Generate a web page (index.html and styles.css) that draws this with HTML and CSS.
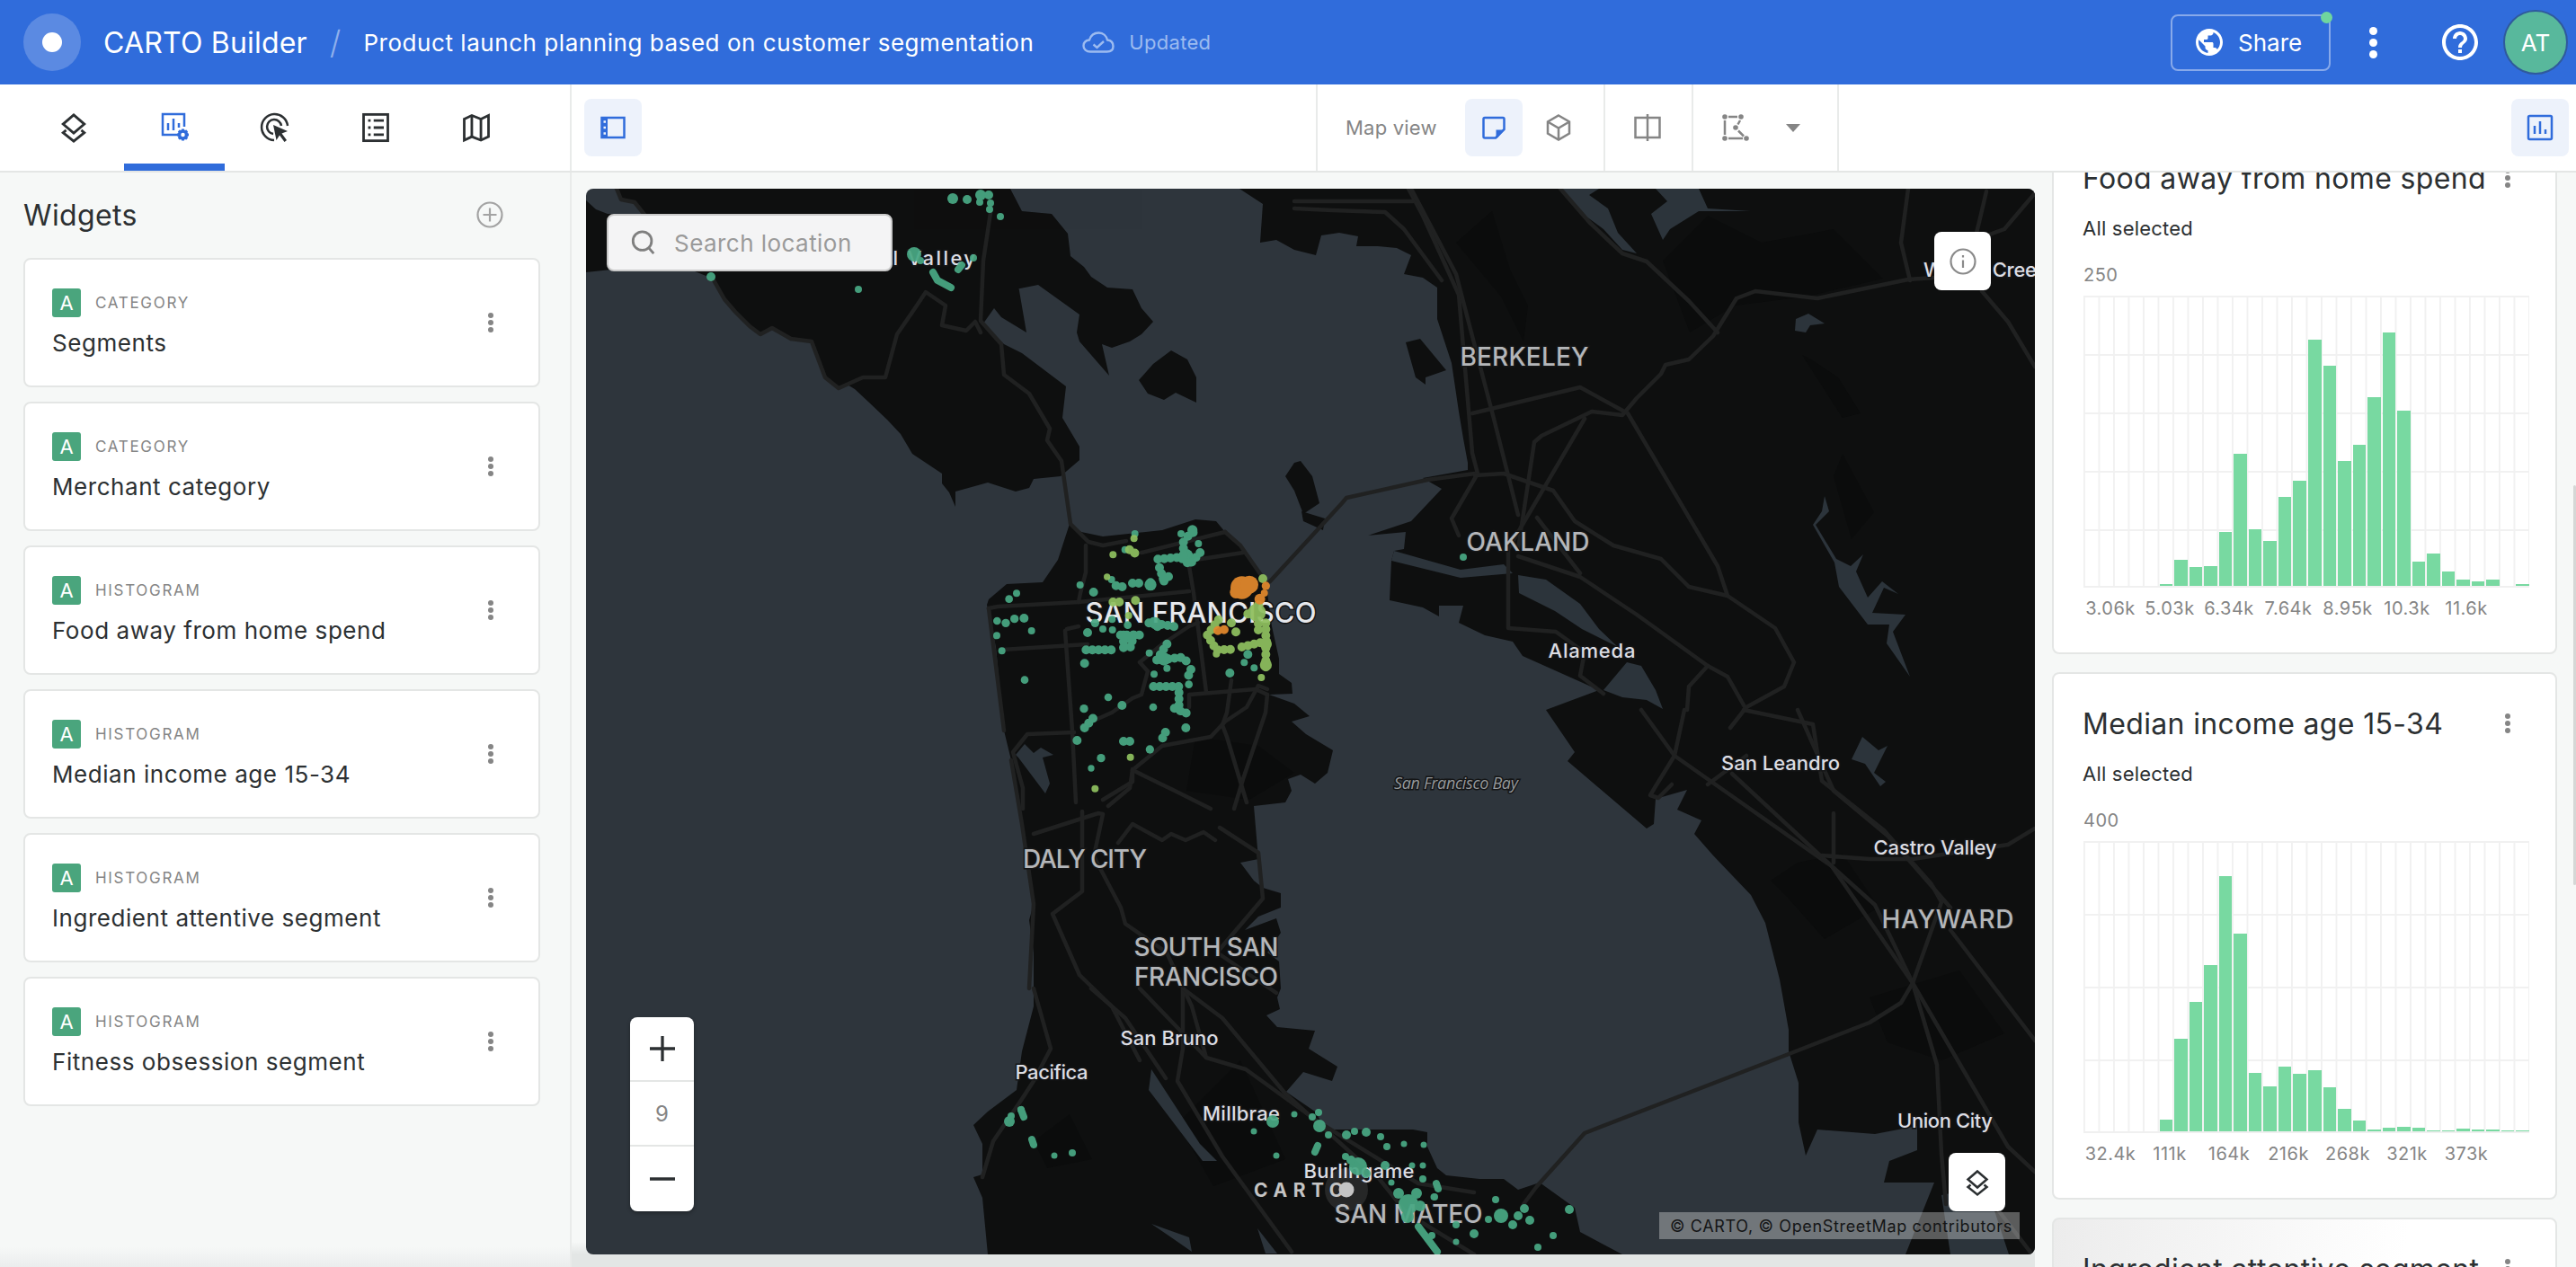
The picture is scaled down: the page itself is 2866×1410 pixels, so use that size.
FILE: index.html
```html
<!DOCTYPE html>
<html lang="en">
<head>
<meta charset="utf-8">
<title>CARTO Builder</title>
<link rel="stylesheet" href="styles.css">
</head>
<body>
<header class="topbar">
  <div class="logo"><span class="logo-dot"></span></div>
  <span class="app-name">CARTO Builder</span>
  <span class="slash">/</span>
  <span class="map-name">Product launch planning based on customer segmentation</span>
  <svg class="cloud" viewBox="0 0 36 24"><path d="M9 22.500C4.500 22.500 1.500 19.500 1.500 16S4 10 8 9.500C9.500 4.500 13.500 1.500 18.500 1.500S27 5 28 9.500C32 10 34.500 12.500 34.500 16.500S31.500 22.500 27.500 22.500Z"/><path d="M12.500 14.500 16.500 18 24 11"/></svg>
  <span class="saved">Updated</span>
  <div class="top-actions">
    <button class="share">
      <svg class="share-icon" viewBox="0 0 24 24"><path d="M12 2C6.480 2 2 6.480 2 12s4.480 10 10 10 10-4.480 10-10S17.520 2 12 2zm-1 17.930c-3.950-.490-7-3.850-7-7.930 0-.620.080-1.210.210-1.790L9 15v1c0 1.100.900 2 2 2v1.930zm6.900-2.540c-.260-.810-1-1.390-1.900-1.390h-1v-3c0-.550-.450-1-1-1H8v-2h2c.550 0 1-.450 1-1V7h2c1.100 0 2-.900 2-2v-.410c2.930 1.190 5 4.060 5 7.410 0 2.080-.800 3.970-2.100 5.390z"/></svg>
      Share
      <span class="share-dot"></span>
    </button>
    <span class="top-kebab"><i></i><i></i><i></i></span>
    <svg class="help" viewBox="0 0 24 24"><path d="M11 18h2v-2h-2v2zm1-16C6.480 2 2 6.480 2 12s4.480 10 10 10 10-4.480 10-10S17.520 2 12 2zm0 18c-4.410 0-8-3.590-8-8s3.590-8 8-8 8 3.590 8 8-3.590 8-8 8zm0-14c-2.210 0-4 1.790-4 4h2c0-1.100.900-2 2-2s2 .900 2 2c0 2-3 1.750-3 5h2c0-2.250 3-2.500 3-5 0-2.210-1.790-4-4-4z"/></svg>
    <div class="avatar">AT</div>
  </div>
</header>

<nav class="toolbar">
  <div class="tabs">
    <div class="tab"><svg class="ico dark" viewBox="0 0 32 32"><path d="M16 3.500 26.500 12.500 16 21.500 5.500 12.500Z"/><path d="M8.500 18.500 5.500 21 16 29.500 26.500 21 23.500 18.500"/></svg></div>
    <div class="tab tab-active"><svg class="ico blue" viewBox="-2 0 36 36"><path d="M22 26H3V3H27V17"/><path d="M9 21V13M15 21V8M21 18V13"/><circle class="gear" cx="25.500" cy="26" r="4"/><path class="gear-teeth" d="M25.500 19.500V22M25.500 30V32.500M19 26H21.500M29.500 26H32M20.900 21.400 22.600 23.100M28.400 28.900 30.100 30.600M30.100 21.400 28.400 23.100M22.600 28.900 20.900 30.600"/></svg></div>
    <div class="tab"><svg class="ico dark" viewBox="0 0 36 36"><path d="M17 32A14.500 14.500 0 1 1 32 16"/><path d="M16 25A8 8 0 1 1 25 16"/><path class="solid" d="M16 15 32 22 25.500 24.500 31 32 28.500 34 23 26.500 19.500 32Z"/></svg></div>
    <div class="tab"><svg class="ico dark" viewBox="0 0 32 32"><rect x="4" y="3" width="24" height="26"/><path d="M8.500 9H11M14 9H24M8.500 16H11M14 16H24M8.500 23H11M14 23H24"/></svg></div>
    <div class="tab"><svg class="ico dark" viewBox="0 0 32 32"><path d="M4 7.500 11.500 4 20.500 7.500 28 4V25L20.500 28.500 11.500 25 4 28.500Z"/><path d="M11.500 4V25M20.500 7.500V28.500"/></svg></div>
  </div>
  <div class="view-tools">
    <button class="tool tool-on"><svg class="ico blue" viewBox="0 0 32 32"><rect x="3.500" y="5" width="25" height="22"/><path class="solid" d="M3.500 5H10V27H3.500Z"/><path class="notch" d="M5.500 9.500H8M5.500 16H8M5.500 22.500H8"/></svg></button>
    <div class="tool-group map-view">
      <span class="tool-label">Map view</span>
      <button class="tool tool-on"><svg class="ico blue" viewBox="0 0 32 32"><path d="M27.500 18V6.500A1.500 1.500 0 0 0 26 5H6A1.500 1.500 0 0 0 4.500 6.500V26A1.500 1.500 0 0 0 6 27.500H18Z"/><path class="solid" d="M18.500 18.500H27.500L20 27.500H18.500Z"/></svg></button>
      <button class="tool"><svg class="ico grey" viewBox="0 0 32 32"><path d="M16 2.500 28 9.500V22.500L16 29.500 4 22.500V9.500Z"/><path d="M4 9.500 16 16.500 28 9.500M16 16.500V29.500"/></svg></button>
    </div>
    <div class="tool-group split">
      <button class="tool"><svg class="ico grey" viewBox="0 0 32 32"><rect x="2.500" y="5" width="27" height="22"/><path d="M16 1V31"/></svg></button>
    </div>
    <div class="tool-group draw">
      <button class="tool"><svg class="ico grey" viewBox="0 0 32 32"><path d="M8 4H18M4 8V24M21 8 18.500 12.500M19 19.500 25 25.500M8 28H24"/><circle class="solid" cx="4" cy="4" r="2.800"/><circle class="solid" cx="22" cy="4" r="2.800"/><circle class="solid" cx="16" cy="16" r="2.800"/><circle class="solid" cx="4" cy="28" r="2.800"/><circle class="solid" cx="28" cy="28" r="2.800"/></svg></button>
      <span class="caret"></span>
    </div>
    <button class="tool tool-on tool-end"><svg class="ico blue" viewBox="0 0 32 32"><rect x="3" y="3" width="26" height="26" rx="1.500"/><path d="M10 23V14M16 23V9M22 23V18"/></svg></button>
  </div>
</nav>

<main class="workspace">
  <aside class="left-panel">
    <div class="panel-head">
      <h2 class="panel-title">Widgets</h2>
      <svg class="add" viewBox="0 0 32 32"><circle cx="16" cy="16" r="13.500"/><path d="M16 8.500V23.500M8.500 16H23.500"/></svg>
    </div>
    <article class="widget-row">
      <div><div class="widget-meta"><span class="src-badge">A</span><span class="widget-type">CATEGORY</span></div><div class="widget-name">Segments</div></div>
      <span class="kebab"><i></i><i></i><i></i></span>
    </article>
    <article class="widget-row">
      <div><div class="widget-meta"><span class="src-badge">A</span><span class="widget-type">CATEGORY</span></div><div class="widget-name">Merchant category</div></div>
      <span class="kebab"><i></i><i></i><i></i></span>
    </article>
    <article class="widget-row">
      <div><div class="widget-meta"><span class="src-badge">A</span><span class="widget-type">HISTOGRAM</span></div><div class="widget-name">Food away from home spend</div></div>
      <span class="kebab"><i></i><i></i><i></i></span>
    </article>
    <article class="widget-row">
      <div><div class="widget-meta"><span class="src-badge">A</span><span class="widget-type">HISTOGRAM</span></div><div class="widget-name">Median income age 15-34</div></div>
      <span class="kebab"><i></i><i></i><i></i></span>
    </article>
    <article class="widget-row">
      <div><div class="widget-meta"><span class="src-badge">A</span><span class="widget-type">HISTOGRAM</span></div><div class="widget-name">Ingredient attentive segment</div></div>
      <span class="kebab"><i></i><i></i><i></i></span>
    </article>
    <article class="widget-row">
      <div><div class="widget-meta"><span class="src-badge">A</span><span class="widget-type">HISTOGRAM</span></div><div class="widget-name">Fitness obsession segment</div></div>
      <span class="kebab"><i></i><i></i><i></i></span>
    </article>
  </aside>

  <section class="map-column">
    <div class="map">
      <svg class="map-art" viewBox="652 210 1612 1186" width="1612" height="1186">
        <rect class="water" x="652" y="210" width="1612" height="1186"/>
        <g class="land">
          <path d="M652 303V223L663 233 676 238 717 238 706 225 691 222 686 210H1124L1137 235 1170 238 1188 260 1191 285 1206 297 1214 308 1232 320 1260 322 1270 343 1283 358 1270 372 1257 380 1237 387 1226 383 1234 418 1201 380 1198 370 1201 350 1155 317 1130 322 1132 312 1142 370 1114 353 1106 343 1094 360 1117 383 1137 393 1186 430 1182 465 1201 497 1201 512 1180 530 1150 533 1145 543 1130 547 1099 537 1063 547 1063 564 1056 548 1048 538 1048 527 1015 505 1002 483 987 467 966 447 951 433 941 427 933 432 918 420 903 380 880 377 859 365 846 372 834 363 818 347 806 333 793 310 773 302 680 300Z"/>
          <path d="M1303 390 1321 400 1331 420 1331 448 1308 437 1295 445 1277 438 1267 423 1283 405Z"/>
          <path d="M1379 210 1405 227 1402 270 1420 267 1440 278 1464 284 1470 262 1490 259 1511 263 1509 274 1533 274 1554 276 1570 284 1562 305 1583 309 1599 320 1599 355 1615 404 1623 458 1628 488 1633 515 1633 523 1583 532 1604 544 1570 580 1522 596 1564 592 1562 611 1551 613 1548 624 1546 668 1583 676 1601 686 1601 674 1628 674 1623 693 1652 707 1683 714 1694 730 1779 768 1720 790 1752 837 1744 847 1832 922 1840 917 1842 889 1877 879 1866 901 1893 913 1885 928 1906 952 1948 996 1964 1027 1980 1090 1990 1146 1990 1170 2001 1205 2001 1249 2009 1286 2022 1257 2086 1262 2133 1253 2133 1280 2102 1292 2096 1316 2152 1316 2120 1396H2264V210Z"/>
          <path d="M1430 530 1440 515 1447 513 1460 530 1468 560 1450 572 1440 546Z"/>
          <path d="M1448 569 1474 577 1472 590 1450 580Z"/>
          <path d="M1564 381 1580 377 1609 412 1586 420 1586 428 1575 420Z"/>
          <path d="M1098 673 1100 667 1120 650 1160 648 1177 623 1190 583 1203 592 1227 597 1293 590 1330 578 1353 580 1363 592 1380 607 1410 650 1410 660 1415 697 1423 733 1423 750 1437 760 1438 772 1412 773 1440 783 1457 797 1437 803 1453 817 1483 835 1477 860 1463 872 1447 862 1433 867 1437 880 1430 893 1395 897 1400 956 1380 960 1395 980 1405 988 1425 994 1425 1010 1400 1020 1385 1035 1420 1022 1425 1038 1410 1060 1423 1070 1425 1100 1421 1110 1424 1123 1409 1130 1421 1143 1463 1147 1456 1167 1488 1187 1482 1203 1450 1193 1431 1215 1463 1237 1475 1257 1533 1257 1572 1257 1588 1260 1588 1276 1599 1300 1609 1308 1646 1312 1673 1312 1689 1324 1713 1316 1752 1344 1758 1371 1805 1396H1099L1093 1333 1083 1310 1093 1307 1093 1273 1083 1252 1099 1237 1131 1213 1137 1170 1150 1120V1060L1145 1024 1150 1006 1137 917 1125 846 1117 813 1108 720Z"/>
        </g>
        <g class="land-dark">
          <path d="M1850 290 1900 240 1960 270 2040 255 2095 310 2010 330 1930 340 1880 370Z"/>
          <path d="M1620 270 1660 235 1680 300 1700 340 1695 380 1670 330Z"/>
          <path d="M2015 400 2045 420 2070 460 2050 465 2005 395Z"/>
          <path d="M2050 505 2085 570 2060 600 2040 530Z"/>
          <path d="M1970 980 2000 960 2050 950 2090 1010 2030 1045 1990 1000Z"/>
          <path d="M2080 1110 2180 1080 2230 1150 2160 1180 2100 1160Z"/>
          <path d="M1330 820 1400 830 1440 860 1390 890 1320 880Z"/>
          <path d="M1150 1270 1190 1240 1215 1290 1165 1300Z"/>
          <path d="M1310 1250 1380 1180 1430 1290 1350 1320Z"/>
        </g>
        <g class="water-shape">
          <path d="M1736 210H1779L1768 217 1789 232 1800 259 1821 282 1805 278 1784 255 1758 236Z"/>
          <path d="M1842 210H1890L1900 232 1948 235H1890L1858 255 1850 267 1837 238 1855 224Z"/>
          <path d="M1998 355 2012 349 2030 360 2014 362 2009 370 1997 368Z"/>
          <path d="M2030 552 2035 569 2020 584 2043 622 2059 630 2073 617 2065 636 2078 665 2094 647 2112 661 2096 654 2083 682 2120 684 2106 703 2125 753 2099 716 2102 695 2078 695 2046 653 2041 626 2017 584 2027 569Z"/>
          <path d="M1689 640 1720 645 1758 672 1779 700 1800 720 1760 700 1730 680 1690 660Z"/>
          <path d="M1784 768 1810 737 1826 741 1842 768 1850 789 1832 779 1805 776Z"/>
          <path d="M1551 613 1625 634 1673 628 1683 638 1625 643 1548 624Z"/>
          <path d="M2060 845 2072 820 2090 835 2100 830 2085 860 2098 870 2092 875 2075 850Z"/>
          <path d="M1130 840 1140 828 1150 838 1158 832 1172 840 1160 843 1168 872 1163 883 1133 843Z"/>
          <path d="M1281 1190 1335 1273 1354 1292 1338 1292 1278 1213Z"/>
          <path d="M1281 1362 1323 1377 1326 1393 1303 1377Z"/>
          <path d="M1399 1367 1421 1395H1408Z"/>
          <path d="M2160 1330 2210 1320 2235 1396H2170Z"/>
        </g>
        <g class="roads">
          <path d="M1102 237 1094 290 1091 357 1114 383 1117 417 1145 438 1168 477 1165 490 1181 513 1191 583 1211 603 1227 607 1253 602"/>
          <path d="M793 310 806 333 818 347 834 363 846 372 859 365 880 377 903 380 918 420 933 432 960 420 985 420 998 372 1020 340 1030 325 1052 340 1048 362 1075 368 1085 358 1091 370"/>
          <path d="M686 210 691 222 706 225 730 255"/>
          <path d="M1100 677 1110 675 1200 670 1323 658"/>
          <path d="M1115 723 1210 717"/>
          <path d="M1100 677 1117 813"/>
          <path d="M1208 607V637L1202 660 1200 670"/>
          <path d="M1187 700 1200 697M1185 702 1193 813 1197 893"/>
          <path d="M1127 837 1143 817 1195 815M1127 837 1138 877V900"/>
          <path d="M1270 615 1363 592M1330 623 1383 615M1323 630 1328 660 1342 770"/>
          <path d="M1363 592 1380 607 1410 650"/>
          <path d="M1413 647 1493 560 1498 554 1588 534 1641 527"/>
          <path d="M1410 767 1400 763 1387 787 1363 803 1347 820 1293 830 1260 857 1257 877 1233 897"/>
          <path d="M1410 773 1408 793 1383 867 1373 900"/>
          <path d="M1370 757 1365 793 1360 807 1365 820 1387 893"/>
          <path d="M1323 787V773L1397 767 1410 773"/>
          <path d="M1260 777 1237 793 1203 808M1277 747 1270 773 1260 777M1268 737 1293 717 1323 697 1333 693M1268 737 1277 747"/>
          <path d="M1260 857 1307 880 1347 900"/>
          <path d="M1150 928 1222 905 1227 906 1217 953 1247 1010 1252 1028 1298 1060 1326 1120 1342 1177"/>
          <path d="M1204 903V992L1171 1017 1201 1085 1237 1120 1268 1180"/>
          <path d="M1260 856V870L1227 890"/>
          <path d="M1357 921 1400 949 1405 1000 1354 1060 1420 1105"/>
          <path d="M1352 935 1339 926 1319 935 1303 928 1293 935 1260 917 1244 938"/>
          <path d="M1125 846 1137 917 1150 1006 1145 1100"/>
          <path d="M1150 1100 1169 1167 1150 1203 1137 1223 1105 1270 1093 1310"/>
          <path d="M1214 1100 1252 1133 1297 1200"/>
          <path d="M1316 1100V1167L1310 1203 1360 1287 1437 1393"/>
          <path d="M1268 1100 1342 1177 1386 1190 1469 1250 1578 1317 1640 1327"/>
          <path d="M1316 1100 1360 1133 1430 1217 1533 1310 1565 1350 1640 1396"/>
          <path d="M1567 210 1583 240 1604 286 1623 328 1638 504 1644 527 1615 577 1623 596"/>
          <path d="M1570 210 1620 305 1662 466 1689 573"/>
          <path d="M1440 224H1572M1440 232 1482 234 1541 236 1562 255 1604 312"/>
          <path d="M1641 529 1673 527 1728 546 1752 580 1795 607 1848 622 1879 653 1922 663 1975 699 1996 737 1985 764 1943 787 1925 810"/>
          <path d="M1638 460 1758 431 1811 460 1911 630 1922 663"/>
          <path d="M1771 458 1715 485 1707 492 1689 611"/>
          <path d="M1771 458 1805 462 1821 443 1848 416 1853 406 1879 400 1906 374 1932 332 1953 324 2022 332 2123 311 2152 309"/>
          <path d="M1763 466 1678 611V699L1731 703 1763 726 1758 752 1784 772"/>
          <path d="M1736 210 1768 247 1789 267 1805 282 1832 291 1879 335 1911 370"/>
          <path d="M1689 619 1758 642 1821 684 1900 741 1922 753 1943 790"/>
          <path d="M1710 576 1758 638M1900 741 1879 764 1877 790"/>
          <path d="M2123 210 2115 270 2125 312"/>
          <path d="M2210 213 2202 247 2197 267 2230 255 2264 215M2205 324 2234 358 2264 408"/>
          <path d="M1874 790 1863 841 1842 875 1836 885 1845 888 1860 873"/>
          <path d="M1826 790 1863 841 2038 964 2086 1007 2128 1094 2155 1185 2160 1284 2165 1340"/>
          <path d="M1940 790 2017 806 2027 869 2096 924 2149 984 2160 1004 2128 1094 2115 1116 2080 1138 1985 1175 1763 1261 1710 1320 1695 1340"/>
          <path d="M1900 873 1943 841M1927 861 2038 964 2128 1094 2234 1276 2264 1304"/>
          <path d="M2170 1035 2264 1158M2040 905V960M2027 952 2080 956 2128 956 2234 940 2264 922"/>
          <path d="M2000 790 2040 880 2100 930 2170 1010"/>
          <path d="M2195 1310 2264 1400"/>
        </g>
        <g class="map-labels">
          <text class="city" x="1696" y="407" textLength="143">BERKELEY</text>
          <text class="city" x="1700" y="613" textLength="137">OAKLAND</text>
          <text class="metro" x="1336" y="693" textLength="257">SAN FRANCISCO</text>
          <text class="town" x="1771" y="732" textLength="97">Alameda</text>
          <text class="city" x="1207" y="966" textLength="138">DALY CITY</text>
          <text class="city" x="1342" y="1064" textLength="161">SOUTH SAN</text>
          <text class="city" x="1342" y="1097" textLength="160">FRANCISCO</text>
          <text class="bay" x="1620" y="878" textLength="138">San Francisco Bay</text>
          <text class="town" x="1981" y="857" textLength="132">San Leandro</text>
          <text class="town" x="2153" y="951" textLength="137">Castro Valley</text>
          <text class="city" x="2167" y="1033" textLength="147">HAYWARD</text>
          <text class="town" x="2164" y="1255" textLength="106">Union City</text>
          <text class="town" x="1381" y="1247" textLength="86">Millbrae</text>
          <text class="town" x="1301" y="1163" textLength="109">San Bruno</text>
          <text class="town" x="1170" y="1201" textLength="81">Pacifica</text>
          <text class="town" x="1512" y="1311" textLength="123">Burlingame</text>
          <text class="city" x="1567" y="1361" textLength="165">SAN MATEO</text>
          <text class="town" x="1020" y="295" textLength="130">Mill Valley</text>
          <text class="town" x="2209" y="308" textLength="138">Walnut Creek</text>
        </g>
        <g class="carto-mark">
          <circle class="halo" cx="1498" cy="1324" r="24"/>
          <circle class="dot" cx="1498" cy="1324" r="8.500"/>
          <text x="1395" y="1332">CARTO</text>
        </g>
        <g class="pts pts-green">
          <g class="spots">
            <circle cx="1060" cy="221" r="6"/><circle cx="1076" cy="222" r="5"/><circle cx="1091" cy="217" r="6"/><circle cx="1100" cy="217" r="5"/><circle cx="1090" cy="225" r="4"/><circle cx="1102" cy="226" r="4"/><circle cx="1101" cy="233" r="4"/><circle cx="1113" cy="241" r="4"/>
            <circle cx="1017" cy="283" r="8"/><circle cx="1024" cy="290" r="4"/><circle cx="1083" cy="287" r="4"/><circle cx="955" cy="322" r="4"/><circle cx="791" cy="308" r="5"/>
            <circle cx="1628" cy="620" r="4"/>
            <circle cx="1136" cy="1235" r="4"/><circle cx="1125" cy="1242" r="4"/><circle cx="1123" cy="1248" r="6"/><circle cx="1193" cy="1283" r="4"/><circle cx="1173" cy="1286" r="3.500"/>
            <circle cx="1440" cy="1240" r="3.500"/><circle cx="1416" cy="1248" r="7"/><circle cx="1395" cy="1259" r="3.500"/><circle cx="1420" cy="1286" r="3.500"/><circle cx="1467" cy="1238" r="4"/><circle cx="1460" cy="1243" r="4"/><circle cx="1468" cy="1253" r="7"/><circle cx="1478" cy="1263" r="4"/><circle cx="1498" cy="1263" r="5"/><circle cx="1507" cy="1259" r="4"/><circle cx="1520" cy="1260" r="5"/><circle cx="1536" cy="1265" r="4"/><circle cx="1543" cy="1276" r="4"/><circle cx="1562" cy="1273" r="3.500"/><circle cx="1584" cy="1274" r="3.500"/><circle cx="1497" cy="1287" r="4"/><circle cx="1511" cy="1298" r="10"/><circle cx="1503" cy="1291" r="5"/><circle cx="1520" cy="1306" r="5"/><circle cx="1541" cy="1297" r="5"/><circle cx="1571" cy="1297" r="3.500"/><circle cx="1583" cy="1297" r="3.500"/><circle cx="1583" cy="1312" r="4"/><circle cx="1548" cy="1316" r="3.500"/><circle cx="1595" cy="1332" r="3.500"/>
            <circle cx="1567" cy="1340" r="11"/><circle cx="1556" cy="1328" r="6"/><circle cx="1576" cy="1328" r="6"/><circle cx="1566" cy="1354" r="7"/><circle cx="1580" cy="1342" r="6"/><circle cx="1596" cy="1332" r="4"/><circle cx="1664" cy="1335" r="4"/><circle cx="1670" cy="1353" r="8"/><circle cx="1689" cy="1353" r="5"/><circle cx="1696" cy="1345" r="5"/><circle cx="1702" cy="1358" r="5"/><circle cx="1746" cy="1346" r="5"/><circle cx="1728" cy="1375" r="4"/><circle cx="1711" cy="1388" r="4"/><circle cx="1620" cy="1363" r="4"/><circle cx="1640" cy="1373" r="5"/><circle cx="1620" cy="1382" r="3.500"/><circle cx="1593" cy="1375" r="4"/><circle cx="1656" cy="1357" r="4"/><circle cx="1683" cy="1363" r="5"/>
          </g>
          <path class="trail" d="M1066 300 1070 295M1038 303 1043 312 1058 320M1136 1235 1139 1243M1148 1268 1150 1274M1466 1275 1463 1282M1598 1317 1600 1323M1578 1365 1599 1393"/>
        </g>
        <g transform="translate(1080 560) scale(.33333)">
          <g class="pts pts-green">
            <g class="spots-big">
              <circle cx="548" cy="102" r="12"/><circle cx="702" cy="102" r="12"/><circle cx="760" cy="135" r="12"/><circle cx="515" cy="155" r="12"/><circle cx="365" cy="273" r="12"/><circle cx="153" cy="301" r="12"/><circle cx="128" cy="320" r="13"/><circle cx="88" cy="393" r="13"/><circle cx="117" cy="400" r="14"/><circle cx="146" cy="386" r="14"/><circle cx="178" cy="384" r="15"/><circle cx="203" cy="426" r="12"/><circle cx="87" cy="442" r="12"/><circle cx="104" cy="493" r="12"/><circle cx="180" cy="590" r="13"/><circle cx="459" cy="648" r="13"/><circle cx="378" cy="686" r="14"/><circle cx="609" cy="681" r="13"/><circle cx="435" cy="851" r="14"/><circle cx="402" cy="885" r="11"/><circle cx="598" cy="822" r="14"/><circle cx="718" cy="750" r="15"/><circle cx="728" cy="605" r="13"/><circle cx="612" cy="571" r="12"/><circle cx="596" cy="500" r="12"/><circle cx="655" cy="551" r="12"/><circle cx="441" cy="420" r="12"/><circle cx="473" cy="423" r="12"/><circle cx="524" cy="407" r="13"/><circle cx="415" cy="400" r="14"/><circle cx="913" cy="532" r="12"/><circle cx="946" cy="550" r="12"/><circle cx="472" cy="388" r="12"/><circle cx="470" cy="255" r="12"/><circle cx="720" cy="175" r="22"/><circle cx="645" cy="520" r="22"/><circle cx="525" cy="445" r="17"/><circle cx="600" cy="272" r="20"/><circle cx="645" cy="250" r="17"/><circle cx="615" cy="400" r="20"/><circle cx="740" cy="90" r="17"/>
            </g>
            <path class="trail-big" d="M625 187 700 180 730 205 770 160M710 130V190M725 110 755 90M630 215 645 260M660 245 640 265M600 265V285M485 275 510 280M540 267H565M410 297H430M385 490H490M500 440H580M510 440V490M545 440 530 490M390 432H410M380 535 392 522M595 400 640 405 680 412M610 395 630 420M655 470 620 525 700 515 725 530M735 555 725 580M610 612H695V680M680 685 730 705M505 675 498 685M380 750 420 705M355 792H362M510 795H540M650 765 640 785M925 505H935M865 567 870 585"/>
          </g>
          <g class="pts pts-lime">
            <g class="spots-big">
              <circle cx="475" cy="172" r="12"/><circle cx="545" cy="118" r="12"/><circle cx="533" cy="848" r="12"/><circle cx="415" cy="953" r="12"/><circle cx="527" cy="375" r="12"/><circle cx="970" cy="582" r="12"/><circle cx="455" cy="246" r="11"/><circle cx="975" cy="252" r="15"/><circle cx="820" cy="503" r="12"/><circle cx="955" cy="365" r="30"/><circle cx="985" cy="540" r="20"/><circle cx="985" cy="470" r="20"/>
            </g>
            <path class="trail-big" d="M530 155 560 175M475 330H515M550 325 565 320M790 440 830 385M790 440 820 490 870 488M870 400H885M960 360V430M925 370H985M960 340 940 370M905 480 990 460M985 400V555M885 430H890"/>
          </g>
          <g class="pts pts-orange">
            <circle cx="905" cy="282" r="38"/><circle cx="930" cy="272" r="30"/><circle cx="885" cy="298" r="20"/>
            <circle cx="985" cy="276" r="14"/><circle cx="965" cy="320" r="18"/><circle cx="980" cy="300" r="12"/>
            <path class="trail-big" d="M825 425 860 420"/>
          </g>
        </g>
      </svg>

      <div class="search"><svg class="search-ico" viewBox="0 0 32 32"><circle cx="14.500" cy="14" r="11"/><path d="M22 22 28 29"/></svg><span>Search location</span></div>
      <button class="map-btn info"><svg viewBox="0 0 32 32"><circle cx="16" cy="16" r="13.500"/><path d="M16 14.500V23M16 9V11.500"/></svg></button>
      <div class="zoom-ctrl">
        <span class="zoom-cell"><svg viewBox="0 0 30 30"><path d="M15 0V30M0 15H30"/></svg></span>
        <span class="zoom-cell zoom-level">9</span>
        <span class="zoom-cell"><svg viewBox="0 0 30 30"><path d="M0 15H30"/></svg></span>
      </div>
      <button class="map-btn layers"><svg class="ico dark" viewBox="0 0 32 32"><path d="M16 3.500 26.500 12.500 16 21.500 5.500 12.500Z"/><path d="M8.500 18.500 5.500 21 16 29.500 26.500 21 23.500 18.500"/></svg></button>
      <div class="attribution">© CARTO, © OpenStreetMap contributors</div>
    </div>
  </section>

  <aside class="right-panel">
    <div class="right-scroll">
      <article class="hist-card">
        <div class="hist-head"><h3 class="hist-title">Food away from home spend</h3><span class="kebab"><i></i><i></i><i></i></span></div>
        <div class="hist-sel">All selected</div>
        <div class="hist-max">250</div>
        <div class="hist-plot hist-five">
          <i></i><i></i><i></i><i></i><i></i>
          <i class="bar" style="height:2px"></i><i class="bar" style="height:29px"></i><i class="bar" style="height:21px"></i><i class="bar" style="height:22px"></i><i class="bar" style="height:60px"></i><i class="bar" style="height:147px"></i><i class="bar" style="height:63px"></i><i class="bar" style="height:50px"></i><i class="bar" style="height:99px"></i><i class="bar" style="height:117px"></i><i class="bar" style="height:274px"></i><i class="bar" style="height:245px"></i><i class="bar" style="height:139px"></i><i class="bar" style="height:157px"></i><i class="bar" style="height:210px"></i><i class="bar" style="height:282px"></i><i class="bar" style="height:195px"></i><i class="bar" style="height:27px"></i><i class="bar" style="height:36px"></i><i class="bar" style="height:16px"></i><i class="bar" style="height:7px"></i><i class="bar" style="height:5px"></i><i class="bar" style="height:7px"></i><i></i><i class="bar" style="height:2px"></i>
        </div>
        <div class="hist-axis"><span>3.06k</span><span>5.03k</span><span>6.34k</span><span>7.64k</span><span>8.95k</span><span>10.3k</span><span>11.6k</span></div>
      </article>
      <article class="hist-card">
        <div class="hist-head"><h3 class="hist-title">Median income age 15-34</h3><span class="kebab"><i></i><i></i><i></i></span></div>
        <div class="hist-sel">All selected</div>
        <div class="hist-max">400</div>
        <div class="hist-plot hist-four">
          <i></i><i></i><i></i><i></i><i></i>
          <i class="bar" style="height:13px"></i><i class="bar" style="height:103px"></i><i class="bar" style="height:144px"></i><i class="bar" style="height:185px"></i><i class="bar" style="height:284px"></i><i class="bar" style="height:220px"></i><i class="bar" style="height:65px"></i><i class="bar" style="height:50px"></i><i class="bar" style="height:72px"></i><i class="bar" style="height:64px"></i><i class="bar" style="height:68px"></i><i class="bar" style="height:49px"></i><i class="bar" style="height:25px"></i><i class="bar" style="height:12px"></i><i class="bar" style="height:2px"></i><i class="bar" style="height:4px"></i><i class="bar" style="height:5px"></i><i class="bar" style="height:4px"></i><i class="bar" style="height:1px"></i><i class="bar" style="height:1px"></i><i class="bar" style="height:3px"></i><i class="bar" style="height:2px"></i><i class="bar" style="height:2px"></i><i class="bar" style="height:1px"></i><i class="bar" style="height:1px"></i>
        </div>
        <div class="hist-axis"><span>32.4k</span><span>111k</span><span>164k</span><span>216k</span><span>268k</span><span>321k</span><span>373k</span></div>
      </article>
      <article class="hist-card hist-fade">
        <div class="hist-head"><h3 class="hist-title">Ingredient attentive segment</h3><span class="kebab"><i></i><i></i><i></i></span></div>
      </article>
    </div>
    <span class="scroll-thumb"></span>
  </aside>
</main>
</body>
</html>
```

FILE: styles.css
```css
* { box-sizing: border-box; }

html, body { height: 100%; }

body {
  margin: 0;
  width: 2866px;
  height: 1410px;
  overflow: hidden;
  display: flex;
  flex-direction: column;
  font-family: Inter, "Liberation Sans", sans-serif;
  color: #2c3032;
  background: #f6f8f7;
}

button { font: inherit; border: 0; background: none; padding: 0; }

/* top bar */
.topbar {
  height: 94px;
  flex: none;
  display: flex;
  align-items: center;
  padding-left: 26px;
  background: #306cdb;
  color: #fff;
}
.logo {
  width: 64px;
  height: 64px;
  border-radius: 50%;
  background: #5b8ae2;
  display: flex;
  align-items: center;
  justify-content: center;
}
.logo-dot { width: 22px; height: 22px; border-radius: 50%; background: #fff; }
.app-name { margin-left: 25px; font-size: 32px; letter-spacing: .2px; }
.slash { margin-left: 25px; font-size: 36px; font-weight: 300; color: #8fb0ec; }
.map-name { margin-left: 25px; font-size: 26px; letter-spacing: .55px; white-space: nowrap; }
.cloud { width: 36px; height: 24px; margin-left: 54px; fill: none; stroke: #9cbbf0; stroke-width: 2.400; }
.saved { margin-left: 16px; font-size: 22px; color: #9cbbf0; letter-spacing: .3px; }
.top-actions { margin-left: auto; display: flex; align-items: center; padding-right: 9px; }
.share {
  position: relative;
  width: 178px;
  height: 63px;
  display: flex;
  align-items: center;
  gap: 16px;
  padding-left: 25px;
  border: 2px solid #87a9ea;
  border-radius: 8px;
  color: #fff;
  font-size: 26px;
}
.share-icon { width: 36px; height: 36px; fill: #fff; margin: 0 -2px; }
.share-dot {
  position: absolute;
  top: -5px;
  right: -4px;
  width: 13px;
  height: 13px;
  border-radius: 50%;
  background: #6fd69e;
}
.top-kebab { display: flex; flex-direction: column; gap: 4px; margin-left: 43px; }
.top-kebab i { width: 9px; height: 9px; border-radius: 50%; background: #fff; }
.help { width: 48px; height: 48px; fill: #fff; margin-left: 68px; }
.avatar {
  width: 72px;
  height: 72px;
  margin-left: 24px;
  border-radius: 50%;
  background: #58b89c;
  border: 2px solid #2f5a9c;
  display: flex;
  align-items: center;
  justify-content: center;
  font-size: 26px;
}

/* toolbar */
.toolbar {
  height: 98px;
  flex: none;
  display: flex;
  background: #fff;
  border-bottom: 2px solid #e4e6e5;
}
.tabs {
  width: 636px;
  flex: none;
  display: flex;
  padding-left: 26px;
  border-right: 2px solid #e9ebea;
}
.tab {
  width: 112px;
  display: flex;
  align-items: center;
  justify-content: center;
  border-bottom: 8px solid transparent;
  border-top: 8px solid transparent;
}
.tab-active { border-bottom-color: #306cdb; }

.ico { width: 32px; height: 32px; fill: none; stroke-width: 2.500; }
.ico .solid { stroke: none; }
.dark { stroke: #2c3032; }
.dark .solid { fill: #2c3032; }
.blue { stroke: #306cdb; }
.blue .solid { fill: #306cdb; }
.blue .notch { stroke: #edf2fb; stroke-width: 2.500; }
.grey { stroke: #858585; }
.grey .solid { fill: #858585; }
.gear { fill: #fff; stroke-width: 3.500; }
.gear-teeth { stroke-width: 3; }
.tab .ico { width: 36px; height: 36px; }

.view-tools { flex: 1; display: flex; align-items: stretch; padding-left: 14px; }
.tool {
  align-self: center;
  width: 64px;
  height: 64px;
  flex: none;
  border-radius: 8px;
  display: flex;
  align-items: center;
  justify-content: center;
}
.tool-on { background: #edf2fb; }
.tool-group { display: flex; align-items: center; border-left: 2px solid #e9ebea; }
.map-view { margin-left: 750px; width: 320px; padding-left: 31px; gap: 8px; }
.tool-label { width: 125px; flex: none; font-size: 22px; color: #858585; letter-spacing: .2px; }
.split { width: 98px; padding-left: 15px; }
.draw { width: 164px; padding-left: 15px; border-right: 2px solid #e9ebea; gap: 24px; }
.caret { width: 0; height: 0; border: 8px solid transparent; border-top: 9px solid #858585; border-bottom: 0; }
.tool-end { margin-left: auto; margin-right: 8px; }

/* workspace */
.workspace { flex: 1; min-height: 0; display: flex; }
.left-panel {
  width: 636px;
  flex: none;
  padding: 28px 33px 0 26px;
  border-right: 2px solid #e9ebea;
  display: flex;
  flex-direction: column;
  gap: 16px;
  background: linear-gradient(#f6f8f7 1196px, #ebeded);
}
.panel-head {
  height: 38px;
  margin-bottom: 13px;
  display: flex;
  align-items: center;
  justify-content: space-between;
  padding-right: 40px;
}
.panel-title { margin: 0; font-size: 32px; font-weight: 400; letter-spacing: .35px; }
.add { width: 32px; height: 32px; fill: none; stroke: #a3a3a3; stroke-width: 2.200; }
.widget-row {
  height: 144px;
  flex: none;
  display: flex;
  align-items: center;
  justify-content: space-between;
  padding: 0 50px 0 30px;
  background: #fff;
  border: 2px solid #e4e6e5;
  border-radius: 8px;
}
.widget-meta { display: flex; align-items: center; gap: 16px; }
.src-badge {
  width: 32px;
  height: 32px;
  border-radius: 3px;
  background: #4aa57d;
  color: #fff;
  font-size: 22px;
  display: flex;
  align-items: center;
  justify-content: center;
}
.widget-type { font-size: 17px; letter-spacing: 1.700px; color: #858585; }
.widget-name { margin-top: 13px; font-size: 26px; letter-spacing: .55px; }
.kebab { display: flex; flex-direction: column; gap: 2px; }
.kebab i { width: 6px; height: 6px; border-radius: 50%; background: #858585; }

.map-column { width: 1628px; flex: none; padding: 18px 0 14px 16px; background: linear-gradient(#f6f8f7 1190px, #e3e6e5 1204px); }
.map {
  position: relative;
  width: 1612px;
  height: 1186px;
  border-radius: 8px;
  overflow: hidden;
}
.map-art { display: block; }
.water { fill: #2e353c; }
.land { fill: #0e0f0f; }
.land-dark { fill: #0b0c0c; }
.water-shape { fill: #2c343b; }
.roads { fill: none; stroke: #202121; stroke-width: 4.500; stroke-linejoin: round; stroke-linecap: round; }
.map-labels text {
  font-family: Inter, "Liberation Sans", sans-serif;
  text-anchor: middle;
  paint-order: stroke;
  stroke: #151617;
  stroke-width: 3px;
}
.map-labels .city { font-size: 28px; font-weight: 500; fill: #b4b6b9; }
.map-labels .metro { font-size: 31px; font-weight: 500; fill: #e6e8ec; }
.map-labels .town { font-size: 22px; font-weight: 500; fill: #dcdde3; }
.map-labels .bay { font-family: "Open Sans", sans-serif; font-style: italic; font-size: 18px; fill: #96999c; }
.carto-mark .halo { fill: rgba(255,255,255,.1); }
.carto-mark .dot { fill: #c4c4c4; }
.carto-mark text { font-size: 21px; font-weight: 700; letter-spacing: 6.500px; fill: #c4c4c4; }
.pts { opacity: .93; fill: currentColor; }
.pts-green { color: #49a884; }
.pts-lime { color: #8fc05f; }
.pts-orange { color: #e3892d; }
.trail { fill: none; stroke: currentColor; stroke-width: 8; stroke-linecap: round; stroke-linejoin: round; }
.trail-big { fill: none; stroke: currentColor; stroke-width: 30; stroke-linecap: round; stroke-linejoin: round; stroke-dasharray: 0 21; }

.search {
  position: absolute;
  left: 23px;
  top: 28px;
  width: 318px;
  height: 64px;
  display: flex;
  align-items: center;
  gap: 19px;
  padding-left: 24px;
  background: #f4f4f5;
  border: 2px solid #c9c9c9;
  border-radius: 8px;
  font-size: 26px;
  color: #9a9a9a;
  letter-spacing: .45px;
}
.search-ico { width: 30px; height: 30px; fill: none; stroke: #7f7f7f; stroke-width: 3; flex: none; }
.map-btn {
  position: absolute;
  width: 63px;
  height: 65px;
  background: #fff;
  border-radius: 8px;
  display: flex;
  align-items: center;
  justify-content: center;
}
.info { left: 1500px; top: 48px; }
.info svg { width: 32px; height: 32px; fill: none; stroke: #8a8a8a; stroke-width: 2.200; }
.layers { left: 1516px; top: 1073px; }
.zoom-ctrl {
  position: absolute;
  left: 49px;
  top: 922px;
  width: 71px;
  display: flex;
  flex-direction: column;
  background: #fff;
  border-radius: 8px;
  box-shadow: 0 2px 4px rgba(0,0,0,.3);
}
.zoom-cell {
  height: 72px;
  display: flex;
  align-items: center;
  justify-content: center;
  border-bottom: 2px solid #e4e6e5;
}
.zoom-cell:last-child { border-bottom: 0; }
.zoom-cell svg { width: 28px; height: 28px; fill: none; stroke: #2c3032; stroke-width: 3.500; }
.zoom-level { font-size: 24px; color: #858585; }
.attribution {
  position: absolute;
  right: 17px;
  bottom: 17px;
  height: 30px;
  width: 401px;
  padding-left: 12px;
  display: flex;
  align-items: center;
  background: rgba(255,255,255,.32);
  color: #141516;
  font-size: 18px;
  letter-spacing: .65px;
  white-space: nowrap;
}

/* right panel */
.right-panel { position: relative; flex: 1; min-width: 0; overflow: hidden; padding: 0 21px 0 19px; }
.right-scroll { margin-top: -51px; display: flex; flex-direction: column; gap: 20px; }
.hist-card {
  height: 587px;
  flex: none;
  padding: 35px 30px 0 33px;
  background: #fff;
  border: 2px solid #e4e6e5;
  border-radius: 8px;
}
.hist-fade { background: linear-gradient(100deg, #ececec, #fff 60%); }
.hist-head { height: 40px; margin-left: -1px; display: flex; align-items: center; justify-content: space-between; padding-right: 20px; }
.hist-title { margin: 0; font-size: 32px; font-weight: 400; letter-spacing: .35px; white-space: nowrap; }
.hist-sel { margin: 21px 0 0 -1px; height: 30px; font-size: 22px; line-height: 30px; letter-spacing: .2px; }
.hist-max { margin-top: 22px; height: 30px; font-size: 20px; line-height: 30px; color: #858585; letter-spacing: .5px; }
.hist-plot {
  width: 496px;
  height: 325px;
  margin-top: 8px;
  display: flex;
  align-items: flex-end;
  gap: 2px;
  padding-left: 2px;
  border-bottom: 2px solid #f0f0f0;
  background-image: linear-gradient(#f1f1f1 2px, transparent 2px), linear-gradient(90deg, #f1f1f1 2px, transparent 2px);
}
.hist-five { background-size: 100% 65px, 16.500px 100%; }
.hist-four { background-size: 100% 81px, 16.500px 100%; }
.hist-plot i { flex: 1; display: block; }
.hist-plot .bar { background: #78d9a1; }
.hist-axis { display: grid; grid-template-columns: repeat(7, 66px); margin: 9px 0 0 -3px; }
.hist-axis span { text-align: center; font-size: 20px; line-height: 28px; color: #858585; letter-spacing: .5px; }
.scroll-thumb {
  position: absolute;
  right: 0;
  top: 348px;
  width: 3px;
  height: 445px;
  background: #d5d7d6;
  border-radius: 2px;
}
```
